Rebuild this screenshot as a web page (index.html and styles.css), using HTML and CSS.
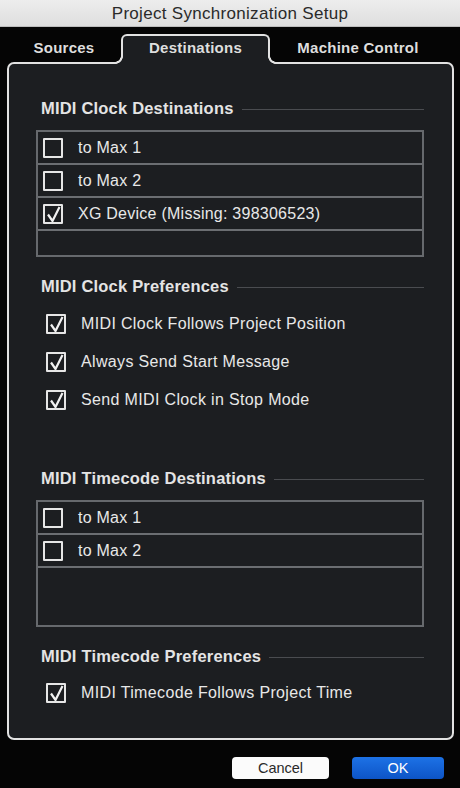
FILE: index.html
```html
<!DOCTYPE html>
<html>
<head>
<meta charset="utf-8">
<link rel="stylesheet" href="styles.css">
</head>
<body>
<div class="window">
  <div class="titlebar">Project Synchronization Setup</div>
  <div class="tabs">
    <div class="tab tab-sources">Sources</div>
    <div class="tab tab-active">Destinations</div>
    <div class="tab tab-machine">Machine Control</div>
  </div>
  <div class="panel">
    <div class="sec-head">MIDI Clock Destinations</div>
    <div class="list">
      <div class="row"><span class="cb"></span><span>to Max 1</span></div>
      <div class="row"><span class="cb"></span><span>to Max 2</span></div>
      <div class="row"><span class="cb"><svg viewBox="0 0 16 16" width="16" height="16"><path d="M3 8.5 L7.5 15 L14.5 1" fill="none" stroke="#f2f2f2" stroke-width="2.2"/></svg></span><span>XG Device (Missing: 398306523)</span></div>
    </div>

    <div class="sec-head sec-gap">MIDI Clock Preferences</div>
    <div class="prefs">
      <div class="pref"><span class="cb"><svg viewBox="0 0 16 16" width="16" height="16"><path d="M3 8.5 L7.5 15 L14.5 1" fill="none" stroke="#f2f2f2" stroke-width="2.2"/></svg></span><span>MIDI Clock Follows Project Position</span></div>
      <div class="pref"><span class="cb"><svg viewBox="0 0 16 16" width="16" height="16"><path d="M3 8.5 L7.5 15 L14.5 1" fill="none" stroke="#f2f2f2" stroke-width="2.2"/></svg></span><span>Always Send Start Message</span></div>
      <div class="pref"><span class="cb"><svg viewBox="0 0 16 16" width="16" height="16"><path d="M3 8.5 L7.5 15 L14.5 1" fill="none" stroke="#f2f2f2" stroke-width="2.2"/></svg></span><span>Send MIDI Clock in Stop Mode</span></div>
    </div>

    <div class="sec-head sec-gap-lg">MIDI Timecode Destinations</div>
    <div class="list">
      <div class="row"><span class="cb"></span><span>to Max 1</span></div>
      <div class="row"><span class="cb"></span><span>to Max 2</span></div>
    </div>

    <div class="sec-head sec-gap">MIDI Timecode Preferences</div>
    <div class="prefs prefs-last">
      <div class="pref"><span class="cb"><svg viewBox="0 0 16 16" width="16" height="16"><path d="M3 8.5 L7.5 15 L14.5 1" fill="none" stroke="#f2f2f2" stroke-width="2.2"/></svg></span><span>MIDI Timecode Follows Project Time</span></div>
    </div>
  </div>
  <div class="footer">
    <div class="btn btn-cancel">Cancel</div>
    <div class="btn btn-ok">OK</div>
  </div>
</div>
</body>
</html>
```

FILE: styles.css
```css
* { box-sizing: border-box; }

html, body {
  margin: 0;
  padding: 0;
  background: #050505;
}

body {
  width: 460px;
  height: 788px;
  overflow: hidden;
  font-family: "Liberation Sans", Arial, sans-serif;
}

.window {
  width: 460px;
  height: 788px;
  background: #050505;
}

.titlebar {
  height: 27px;
  line-height: 28px;
  text-align: center;
  font-size: 17px;
  letter-spacing: 0.3px;
  color: #2a2a2a;
  background: linear-gradient(#ededed, #dedede);
  border-bottom: 1px solid #bdbdbd;
}

.tabs {
  height: 35px;
  display: flex;
  align-items: flex-end;
  padding-left: 7px;
}

.tab {
  height: 30px;
  padding-top: 5px;
  font-size: 15px;
  font-weight: bold;
  letter-spacing: 0.25px;
  line-height: 18px;
  color: #dedede;
  text-align: center;
  margin-bottom: -2px;
}

.tab-sources { width: 114px; padding-top: 5px; }
.tab-machine { width: 176px; }

.tab-active {
  position: relative;
  z-index: 1;
  width: 149px;
  padding-top: 3px;
  background: #1c1e21;
  border: 2px solid #e2e2e2;
  border-bottom: 0;
  border-radius: 6px 6px 0 0;
}

.tab-active::before,
.tab-active::after {
  content: "";
  position: absolute;
  bottom: 0;
  width: 8px;
  height: 8px;
}

.tab-active::before {
  left: -8px;
  background: radial-gradient(circle at 0 0, #050505 5.5px, #e2e2e2 6px, #e2e2e2 7.6px, #1c1e21 8.2px);
}

.tab-active::after {
  right: -8px;
  background: radial-gradient(circle at 100% 0, #050505 5.5px, #e2e2e2 6px, #e2e2e2 7.6px, #1c1e21 8.2px);
}

.panel {
  margin: 0 6px 0 7px;
  background: #1c1e21;
  border: 2px solid #e2e2e2;
  border-radius: 7px;
  padding: 34px 28px 26px 27px;
}

.sec-head {
  display: flex;
  align-items: center;
  margin-left: 5px;
  font-size: 16.5px;
  font-weight: bold;
  letter-spacing: 0.2px;
  line-height: 20px;
  color: #e4e4e4;
}

.sec-head::after {
  content: "";
  flex: 1;
  height: 1px;
  margin-left: 8px;
  margin-top: 2px;
  background: #4a4c50;
}

.sec-gap { margin-top: 19px; }
.sec-gap-lg { margin-top: 49px; }

.list {
  margin-top: 12px;
  height: 127px;
  border: 2px solid #66696d;
}

.row {
  height: 33px;
  display: flex;
  align-items: center;
  gap: 15px;
  padding-left: 5px;
  border-bottom: 2px solid #6b6e72;
  font-size: 16px;
  letter-spacing: 0.25px;
  color: #e8e8e8;
}

.cb {
  flex: none;
  width: 20px;
  height: 20px;
  border: 2px solid #e6e6e6;
  border-radius: 1px;
  display: flex;
  align-items: center;
  justify-content: center;
}

.cb svg { display: block; }

.prefs { margin-top: 9px; }
.prefs-last { margin-top: 8px; }

.pref {
  height: 38px;
  display: flex;
  align-items: center;
  gap: 15px;
  padding-left: 10px;
  font-size: 16px;
  letter-spacing: 0.35px;
  color: #e8e8e8;
}

.footer {
  display: flex;
  justify-content: flex-end;
  gap: 23px;
  padding: 17px 16px 0 0;
}

.btn {
  height: 22px;
  line-height: 22px;
  text-align: center;
  font-size: 14.5px;
  border-radius: 4px;
}

.btn-cancel {
  width: 97px;
  background: #fbfbfb;
  color: #2a2a2a;
}

.btn-ok {
  width: 92px;
  background: linear-gradient(#1d72e6, #0d54c6);
  color: #ffffff;
}
```
